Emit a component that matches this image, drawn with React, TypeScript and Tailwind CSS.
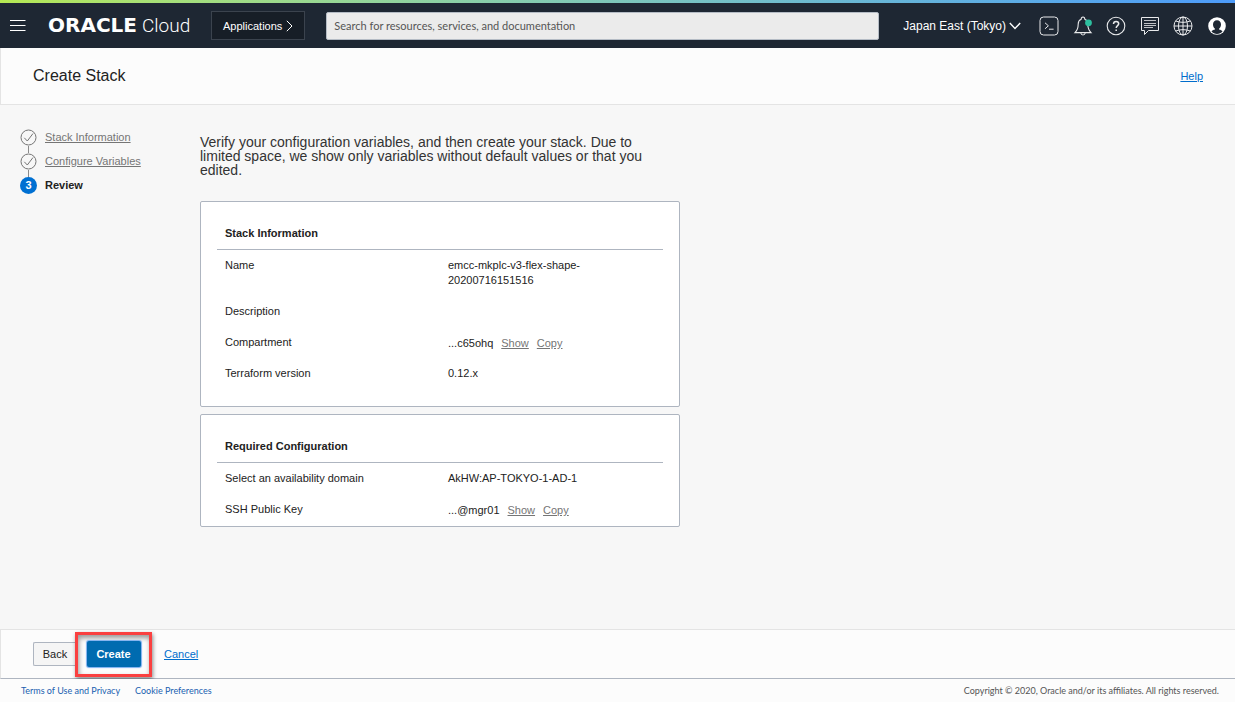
import type { ReactNode } from "react";

const iconButton = "flex h-6 w-6 shrink-0 items-center justify-center text-[#e8e9eb]";

function TerminalIcon() {
  return (
    <svg width="20" height="20" viewBox="0 0 20 20" fill="none" stroke="currentColor" strokeWidth="1">
      <rect x="1" y="1" width="18" height="18" rx="3.5" />
      <path d="M6 6.8l3.4 3L6 12.8M10 13.2h4.6" />
    </svg>
  );
}

function BellIcon() {
  return (
    <svg width="20" height="20" viewBox="0 0 20 20" fill="none" stroke="currentColor" strokeWidth="1.1">
      <path d="M8.2 3.2C8.2 1.9 8.900 1 10 1s1.800.9 1.800 2.200c2 .8 3 2.500 3 4.800 0 4 .9 6.400 3.200 8.600H2C4.300 14.400 5.200 12 5.200 8c0-2.300 1-4 3-4.800z" />
      <path d="M7.800 17c.3 1.300 1.100 2 2.200 2s1.900-.7 2.200-2" />
      <circle cx="15.500" cy="6.800" r="3.400" fill="#2dbf9f" stroke="none" />
    </svg>
  );
}

function HelpIcon() {
  return (
    <svg width="20" height="20" viewBox="0 0 20 20" fill="none" stroke="currentColor" strokeWidth="1.1">
      <circle cx="10" cy="10" r="8.800" />
      <path d="M7.500 8c0-1.600 1-2.600 2.600-2.600s2.600 1 2.600 2.400c0 1.800-2.500 2-2.500 4.200" strokeWidth="1.500" />
      <path d="M10.200 13.400v1.500" strokeWidth="1.500" />
    </svg>
  );
}

function ChatIcon() {
  return (
    <svg width="20" height="20" viewBox="0 0 20 20" fill="none" stroke="currentColor" strokeWidth="1">
      <path d="M1.500 1.500h17v13H8.500L4.500 18.500v-4h-3z" />
      <path d="M4 4.500h12M4 7.500h12M4 9.500h12M4 11.500h9" strokeWidth="0.800" />
    </svg>
  );
}

function GlobeIcon() {
  return (
    <svg width="20" height="20" viewBox="0 0 20 20" fill="none" stroke="currentColor" strokeWidth="1">
      <circle cx="10" cy="10" r="9" />
      <ellipse cx="10" cy="10" rx="4.500" ry="9" />
      <path d="M10 1v18M1 10h18M2.800 5c4 1.800 10.400 1.800 14.400 0M2.800 15c4-1.800 10.400-1.800 14.400 0" />
    </svg>
  );
}

function UserIcon() {
  return (
    <svg width="18" height="18" viewBox="0 0 18 18" fill="none">
      <circle cx="9" cy="9" r="8.800" fill="#fff" />
      <path
        d="M9 3.200c2.500 0 4 1.700 4 4.200 0 1.900-.8 3.500-2 4.300v.9c1.600.4 2.900.9 3.500 1.900C13.200 16.100 11.200 17 9 17s-4.200-.9-5.500-2.500c.6-1 1.900-1.500 3.500-1.900v-.9c-1.200-.8-2-2.400-2-4.300 0-2.500 1.500-4.200 4-4.200z"
        fill="#1e2733"
      />
    </svg>
  );
}

function TopBar() {
  return (
    <header className="flex h-[45px] items-center bg-[#1e2733] pr-[6px] pl-[10px] text-white">
      <button type="button" aria-label="Open navigation menu" className="mr-[22px]">
        <svg width="16" height="13" viewBox="0 0 16 13" stroke="#fff" strokeWidth="1">
          <path d="M0 1.500h15.500M0 6.500h15.500M0 11.500h15.500" />
        </svg>
      </button>
      <a href="#home" className="flex w-[163px] shrink-0 items-baseline gap-[5px] leading-6">
        <span className="font-['DejaVu_Sans',sans-serif] text-[20px] font-bold">ORACLE</span>
        <span className="font-[Roboto,sans-serif] text-[19px] font-light">Cloud</span>
      </a>
      <button
        type="button"
        className="flex h-[29px] shrink-0 items-center gap-1 border border-[#3b434e] bg-[#171e27] px-[11px] pt-px text-[11px]"
      >
        Applications
        <svg width="7" height="12" viewBox="0 0 7 12" fill="none" stroke="#fff" strokeWidth="1">
          <path d="M.8.8L6 6 .8 11.200" />
        </svg>
      </button>
      <input
        type="search"
        aria-label="Search"
        placeholder="Search for resources, services, and documentation"
        className="mr-6 ml-[21px] h-7 min-w-0 flex-1 rounded-[2px] border border-[#b5bcc5] bg-[#ebebeb] px-[7px] font-[Lato,sans-serif] text-[11px] text-[#555] placeholder:text-[#555]"
      />
      <button type="button" className="mr-4 flex shrink-0 items-center gap-[3px] text-[12px]">
        Japan East (Tokyo)
        <svg width="12" height="8" viewBox="0 0 12 8" fill="none" stroke="#fff" strokeWidth="1.400">
          <path d="M.8 1L6 6.500 11.200 1" />
        </svg>
      </button>
      <nav aria-label="Tools" className="flex w-[192px] shrink-0 justify-between">
        <button type="button" aria-label="Cloud Shell" className={iconButton}><TerminalIcon /></button>
        <button type="button" aria-label="Announcements" className={iconButton}><BellIcon /></button>
        <button type="button" aria-label="Help" className={iconButton}><HelpIcon /></button>
        <button type="button" aria-label="Chat" className={iconButton}><ChatIcon /></button>
        <button type="button" aria-label="Language" className={iconButton}><GlobeIcon /></button>
        <button type="button" aria-label="Profile" className={iconButton}><UserIcon /></button>
      </nav>
    </header>
  );
}

function DoneStep({ children }: { children: ReactNode }) {
  return (
    <li className="flex">
      <span className="mr-2 flex flex-col items-center">
        <svg width="17" height="17" viewBox="0 0 17 17" fill="none" stroke="#757575" strokeWidth="1">
          <circle cx="8.500" cy="8.500" r="7.500" />
          <path d="M4.300 8.800l3 3.200L13 4.500" />
        </svg>
        <span className="h-[7px] w-px bg-[#8b8b8b]" />
      </span>
      <a href="#step" className="leading-[17px] text-[#757575] underline">{children}</a>
    </li>
  );
}

function Card({ title, className, children }: { title: string; className: string; children: ReactNode }) {
  return (
    <section className={`rounded-[2px] border border-[#aeb5c0] bg-white px-4 pt-6 ${className}`}>
      <h2 className="border-b border-[#aeb5c0] px-2 pb-[9px] text-[11px] leading-[14px] font-bold">{title}</h2>
      <dl className="flex flex-col gap-4 px-2 pt-2">{children}</dl>
    </section>
  );
}

function Row({ label, children }: { label: string; children?: ReactNode }) {
  return (
    <div className="grid grid-cols-[223px_1fr] leading-[15px]">
      <dt>{label}</dt>
      <dd>{children}</dd>
    </div>
  );
}

function MaskedValue({ value }: { value: string }) {
  return (
    <span className="-mb-0.5 flex gap-2 leading-[17px]">
      <span>{value}</span>
      <button type="button" className="text-[#757575] underline">Show</button>
      <button type="button" className="text-[#757575] underline">Copy</button>
    </span>
  );
}

export default function App() {
  return (
    <div className="flex min-h-screen flex-col bg-[#f7f7f7] font-['Liberation_Sans',Arial,sans-serif] text-[11px] text-[#222]">
      <div className="h-[3px] bg-linear-to-r from-[#b5e853] to-[#4d9bfa]" />
      <TopBar />
      <div className="flex h-[57px] items-center justify-between border-b border-l border-[#e4e4e4] bg-[#fcfcfc] pr-8 pl-8">
        <h1 className="text-[16px] leading-5">Create Stack</h1>
        <a href="#help" className="text-[#006dcc] underline">Help</a>
      </div>

      <main className="flex flex-1 items-start pb-8">
        <ol className="w-[200px] shrink-0 pt-6 pl-5">
          <DoneStep>Stack Information</DoneStep>
          <DoneStep>Configure Variables</DoneStep>
          <li className="flex items-center gap-2 leading-[17px] font-bold" aria-current="step">
            <span className="flex size-[17px] items-center justify-center rounded-full bg-[#0070d2] text-white">3</span>
            Review
          </li>
        </ol>
        <div className="w-[480px] pt-[30px]">
          <p className="mb-6 max-w-[460px] text-[14px] leading-[14px] text-[#333]">
            Verify your configuration variables, and then create your stack. Due to limited space, we show only
            variables without default values or that you edited.
          </p>
          <div className="flex flex-col gap-[7px]">
            <Card title="Stack Information" className="pb-[25px]">
              <Row label="Name">
                emcc-mkplc-v3-flex-shape-
                <br />
                20200716151516
              </Row>
              <Row label="Description" />
              <Row label="Compartment">
                <MaskedValue value="...c65ohq" />
              </Row>
              <Row label="Terraform version">0.12.x</Row>
            </Card>
            <Card title="Required Configuration" className="pb-[9px]">
              <Row label="Select an availability domain">AkHW:AP-TOKYO-1-AD-1</Row>
              <Row label="SSH Public Key">
                <MaskedValue value="...@mgr01" />
              </Row>
            </Card>
          </div>
        </div>
      </main>

      <div className="flex h-[50px] items-center border-t border-b border-l border-t-[#e4e4e4] border-b-[#aeb5c0] border-l-[#e4e4e4] bg-[#fcfcfc] pl-8">
        <button type="button" className="h-6 w-[43px] rounded-l-[2px] border border-r-0 border-[#aeb5c0] bg-[#f5f5f5]">
          Back
        </button>
        <div className="-ml-px flex h-[45px] w-[77px] items-center justify-center border-3 border-[#fa4040] bg-[#fcfcfc] shadow-[1px_2px_4px_rgba(0,0,0,0.45),inset_1px_3px_5px_rgba(0,0,0,0.4)]">
          <button
            type="button"
            className="h-[26px] w-[54px] rounded-[2px] bg-[#006bb0] font-bold text-white shadow-[0_0_1px_1px_#7aaef0]"
          >
            Create
          </button>
        </div>
        <a href="#cancel" className="ml-3 text-[#006dcc] underline">Cancel</a>
      </div>

      <footer className="flex h-[23px] items-center justify-between bg-[#fcfcfc] pr-4 pl-[21px] font-[Lato,sans-serif] text-[9px]">
        <nav aria-label="Legal" className="flex gap-[15px] text-[#1a5fb0]">
          <a href="#terms">Terms of Use and Privacy</a>
          <a href="#cookies">Cookie Preferences</a>
        </nav>
        <p className="text-[#555]">Copyright © 2020, Oracle and/or its affiliates. All rights reserved.</p>
      </footer>
    </div>
  );
}
